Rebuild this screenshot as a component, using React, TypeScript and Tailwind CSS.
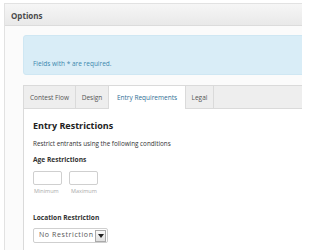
export default function App() {
  return (
    <div className="w-[302px] h-[250px] overflow-hidden bg-white font-['Open_Sans',sans-serif]">
      <div className="ml-[4px] mt-[3px] h-[260px] w-[320px] border-l border-t border-[#e2e2e2]">
        <div className="h-[22px] border-b border-[#dcdcdc] bg-gradient-to-b from-[#f6f6f6] to-[#e9e9e9] pl-[6px] text-[8px] font-bold leading-[23px] text-[#4a4a4a]">
          Options
        </div>
        <div className="h-full bg-[#fbfbfb] pl-[18px] pt-[9px]">
          <div className="h-[40px] rounded-l-[3px] border border-[#cfe7f3] bg-[#d9edf7] pl-[9px] pt-[23px] text-[6.5px] leading-[10px] text-[#3a87ad]">
            Fields with * are required.
          </div>
          <div className="mt-[10px] h-full border-l border-t border-[#dadada] bg-white">
            <div className="flex h-[23px] bg-[#eeeeee] text-[6.5px] leading-[23px] text-[#555]">
              <div className="w-[52px] border-r border-b border-[#dadada] text-center">Contest Flow</div>
              <div className="w-[33px] border-r border-b border-[#dadada] text-center">Design</div>
              <div className="w-[77px] border-r border-[#dadada] bg-white text-center text-[#2f6f95]">Entry Requirements</div>
              <div className="w-[28px] border-r border-b border-[#dadada] text-center">Legal</div>
              <div className="flex-1 border-b border-[#dadada]" />
            </div>
            <div className="pl-[9px] pt-[9px] text-[#333]">
              <div className="text-[9px] font-bold leading-[16px] text-[#222]">Entry Restrictions</div>
              <div className="mt-[5px] text-[6.3px] leading-[10px] text-[#333]">
                Restrict entrants using the following conditions
              </div>
              <div className="mt-[6px] text-[6.6px] font-bold leading-[10px] text-[#333]">Age Restrictions</div>
              <div className="mt-[6px] flex gap-[7px]">
                <div className="flex flex-col">
                  <div className="h-[14px] w-[29px] rounded-[2px] border border-[#cfcfcf] bg-white" />
                  <div className="mt-[2px] pl-[1px] text-[5.5px] leading-[8px] text-[#aaa]">Minimum</div>
                </div>
                <div className="flex flex-col">
                  <div className="h-[14px] w-[29px] rounded-[2px] border border-[#cfcfcf] bg-white" />
                  <div className="mt-[2px] pl-[2px] text-[5.5px] leading-[8px] text-[#aaa]">Maximum</div>
                </div>
              </div>
              <div className="mt-[18px] text-[6.6px] font-bold leading-[10px] text-[#333]">Location Restriction</div>
              <div className="mt-[5px] flex h-[15px] w-[75px] items-center rounded-[2px] border border-[#cfcfcf] bg-white pl-[5px] pr-[1px]">
                <span className="flex-1 text-[7px] tracking-[0.6px] text-[#555]">No Restriction</span>
                <span className="flex h-[12px] w-[11px] items-center justify-center border border-[#aaa] bg-gradient-to-b from-[#fafafa] to-[#e0e0e0]">
                  <svg width="6" height="4" viewBox="0 0 6 4">
                    <path d="M0 0 H6 L3 4 Z" fill="#222" />
                  </svg>
                </span>
              </div>
            </div>
          </div>
        </div>
      </div>
    </div>
  )
}
